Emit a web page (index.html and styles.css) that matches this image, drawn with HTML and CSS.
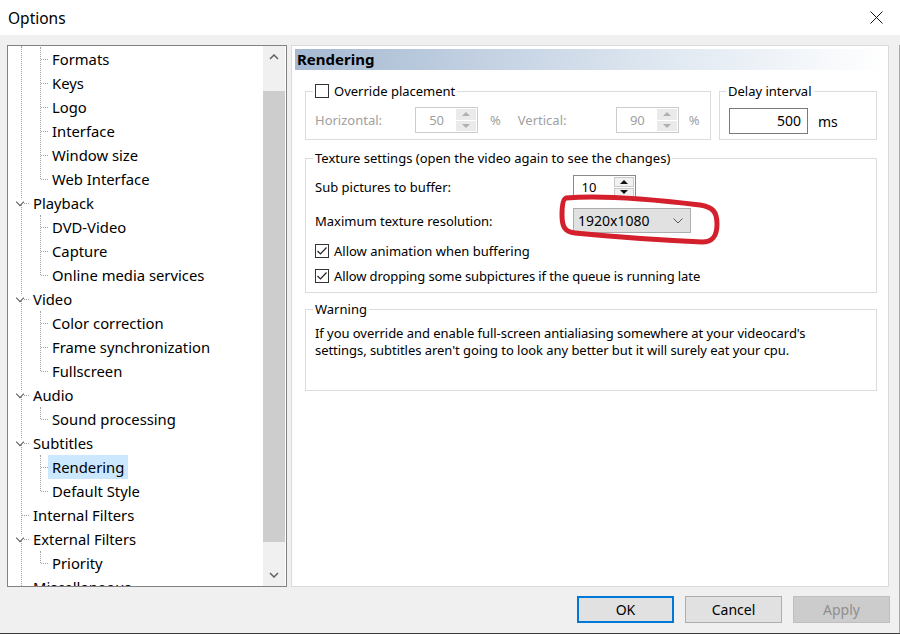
FILE: index.html
```html
<!DOCTYPE html>
<html lang="en">
<head>
    <meta charset="UTF-8">
    <title>Options</title>
    <link rel="stylesheet" href="styles.css">
</head>
<body>

<div class="window">
    <div class="titlebar">
        <span class="title">Options</span>
        <svg class="close" width="13" height="13" viewBox="0 0 13 13">
            <path d="M0.5 0.5 L12.5 12.5 M12.5 0.5 L0.5 12.5" stroke="#111" stroke-width="1" fill="none"/>
        </svg>
    </div>

    <div class="client">
        <div class="main">
            <!-- arvore de paginas -->
            <div class="tree">
                <div class="tree-list">
                    <div class="group">
                        <div class="row l1"><span class="label">Formats</span></div>
                        <div class="row l1"><span class="label">Keys</span></div>
                        <div class="row l1"><span class="label">Logo</span></div>
                        <div class="row l1"><span class="label">Interface</span></div>
                        <div class="row l1"><span class="label">Window size</span></div>
                        <div class="row l1"><span class="label">Web Interface</span></div>
                    </div>
                    <div class="row l0 open"><span class="label">Playback</span></div>
                    <div class="group">
                        <div class="row l1"><span class="label">DVD-Video</span></div>
                        <div class="row l1"><span class="label">Capture</span></div>
                        <div class="row l1"><span class="label">Online media services</span></div>
                    </div>
                    <div class="row l0 open"><span class="label">Video</span></div>
                    <div class="group">
                        <div class="row l1"><span class="label">Color correction</span></div>
                        <div class="row l1"><span class="label">Frame synchronization</span></div>
                        <div class="row l1"><span class="label">Fullscreen</span></div>
                    </div>
                    <div class="row l0 open"><span class="label">Audio</span></div>
                    <div class="group">
                        <div class="row l1"><span class="label">Sound processing</span></div>
                    </div>
                    <div class="row l0 open"><span class="label">Subtitles</span></div>
                    <div class="group">
                        <div class="row l1"><span class="label selected">Rendering</span></div>
                        <div class="row l1"><span class="label">Default Style</span></div>
                    </div>
                    <div class="row l0"><span class="label">Internal Filters</span></div>
                    <div class="row l0 open"><span class="label">External Filters</span></div>
                    <div class="group">
                        <div class="row l1"><span class="label">Priority</span></div>
                    </div>
                    <div class="row l0"><span class="label">Miscellaneous</span></div>
                </div>
                <div class="scrollbar">
                    <div class="sb-btn">
                        <svg width="10" height="6" viewBox="0 0 10 6"><path d="M1 5 L5 1 L9 5" stroke="#606060" stroke-width="1.5" fill="none"/></svg>
                    </div>
                    <div class="sb-track"><div class="sb-thumb"></div></div>
                    <div class="sb-btn">
                        <svg width="10" height="6" viewBox="0 0 10 6"><path d="M1 1 L5 5 L9 1" stroke="#606060" stroke-width="1.5" fill="none"/></svg>
                    </div>
                </div>
            </div>

            <!-- pagina Rendering -->
            <div class="page">
                <div class="page-header">Rendering</div>
                <div class="page-body">
                    <div class="row-top">
                        <fieldset class="override">
                            <legend><span class="check"></span>Override placement</legend>
                            <div class="line disabled">
                                <span class="lbl-h">Horizontal:</span>
                                <div class="spin">
                                    <span class="spin-val">50</span>
                                    <span class="spin-btns"><span class="up"></span><span class="dn"></span></span>
                                </div>
                                <span class="pct">%</span>
                                <span class="lbl-v">Vertical:</span>
                                <div class="spin">
                                    <span class="spin-val">90</span>
                                    <span class="spin-btns"><span class="up"></span><span class="dn"></span></span>
                                </div>
                                <span class="pct last">%</span>
                            </div>
                        </fieldset>
                        <fieldset class="delay">
                            <legend>Delay interval</legend>
                            <div class="line">
                                <span class="textbox">500</span>
                                <span class="unit">ms</span>
                            </div>
                        </fieldset>
                    </div>

                    <fieldset class="texture">
                        <legend>Texture settings (open the video again to see the changes)</legend>
                        <div class="tex-row">
                            <span class="tex-label">Sub pictures to buffer:</span>
                            <div class="spin enabled">
                                <span class="spin-val">10</span>
                                <span class="spin-btns"><span class="up"></span><span class="dn"></span></span>
                            </div>
                        </div>
                        <div class="tex-row second">
                            <span class="tex-label">Maximum texture resolution:</span>
                            <div class="combo">
                                <span>1920x1080</span>
                                <svg width="10" height="6" viewBox="0 0 10 6"><path d="M0.5 0.5 L5 5 L9.5 0.5" stroke="#555" stroke-width="1" fill="none"/></svg>
                            </div>
                        </div>
                        <div class="check-row">
                            <span class="check on">
                                <svg width="12" height="12" viewBox="0 0 12 12"><path d="M1.5 6 L4.5 9 L10.5 2.5" stroke="#222" stroke-width="1.2" fill="none"/></svg>
                            </span>
                            Allow animation when buffering
                        </div>
                        <div class="check-row last">
                            <span class="check on">
                                <svg width="12" height="12" viewBox="0 0 12 12"><path d="M1.5 6 L4.5 9 L10.5 2.5" stroke="#222" stroke-width="1.2" fill="none"/></svg>
                            </span>
                            Allow dropping some subpictures if the queue is running late
                        </div>
                    </fieldset>

                    <fieldset class="warning">
                        <legend>Warning</legend>
                        <p>If you override and enable full-screen antialiasing somewhere at your videocard's<br>settings, subtitles aren't going to look any better but it will surely eat your cpu.</p>
                    </fieldset>
                </div>
            </div>
        </div>

        <div class="buttons">
            <button class="default">OK</button>
            <button>Cancel</button>
            <button disabled>Apply</button>
        </div>
    </div>

    <!-- marcacao vermelha desenhada por cima -->
    <svg class="mark" width="900" height="634" viewBox="0 0 900 634">
        <path d="M566 198 C600 195 650 199 700 205 C713 207 717 212 717 224 C717 236 713 242 702 242 C660 240 615 237 575 233 C565 232 562 227 562 215 C562 205 563 199 566 198 Z"
              stroke="#d3202c" stroke-width="5" fill="none" stroke-linejoin="round"/>
    </svg>
</div>

</body>
</html>
```

FILE: styles.css
```css
* {
    box-sizing: border-box;
}
body {
    margin: 0;
    font-family: "Noto Sans", "Open Sans", sans-serif;
    color: #000;
}
.window {
    width: 900px;
    height: 634px;
    background: #f0f0f0;
    position: relative;
    border-bottom: 1px solid #3a3a3a;
    overflow: hidden;
}
.titlebar {
    height: 35px;
    background: #fff;
    display: flex;
    align-items: center;
    justify-content: space-between;
    padding: 0 17px 0 8px;
}
.title {
    font-size: 15.5px;
}
.client {
    height: 598px;
    border-right: 1px solid #a8a8a8;
}
.main {
    display: flex;
    gap: 4px;
    height: 542px;
    margin: 10px 10px 0 7px;
}

/* tree */
.tree {
    width: 280px;
    border: 1px solid #828282;
    background: #fff;
    display: flex;
}
.tree-list {
    flex: 1;
    overflow: hidden;
    position: relative;
    padding-top: 1px;
    font-size: 14.8px;
}
.tree-list::before {
    content: '';
    position: absolute;
    left: 13px;
    top: 0;
    bottom: 0;
    border-left: 1px dotted #a0a0a0;
}
.group {
    position: relative;
}
.group::before {
    content: '';
    position: absolute;
    left: 32px;
    top: 0;
    height: calc(100% - 12px);
    border-left: 1px dotted #a0a0a0;
}
.row {
    height: 24px;
    display: flex;
    align-items: center;
    position: relative;
}
.row::before {
    content: '';
    position: absolute;
    top: 12px;
    width: 7px;
    border-top: 1px dotted #a0a0a0;
}
.row.l0 {
    padding-left: 21px;
}
.row.l0::before {
    left: 14px;
}
.row.l1 {
    padding-left: 40px;
}
.row.l1::before {
    left: 33px;
}
.row.open::after {
    content: '';
    position: absolute;
    left: 9px;
    top: 8px;
    width: 5px;
    height: 5px;
    border-right: 1.3px solid #555;
    border-bottom: 1.3px solid #555;
    transform: rotate(45deg);
    background: #fff;
}
.label {
    padding: 0 4px;
    line-height: 24px;
    white-space: nowrap;
}
.label.selected {
    background: #cce8ff;
}
.scrollbar {
    width: 22px;
    margin-right: 1px;
    background: #f0f0f0;
    display: flex;
    flex-direction: column;
}
.sb-btn {
    height: 22px;
    display: flex;
    align-items: center;
    justify-content: center;
}
.sb-track {
    flex: 1;
    padding-top: 23px;
}
.sb-thumb {
    height: 451px;
    background: #cdcdcd;
}

/* page */
.page {
    flex: 1;
    background: #fff;
    border: 1px solid #dadada;
    padding: 3px 3px 0;
}
.page-header {
    height: 21px;
    line-height: 21px;
    padding-left: 2px;
    font-size: 15px;
    font-weight: bold;
    background: linear-gradient(to right, #a5b9d2, #dde6f0 60%, #fff);
}
.page-body {
    padding: 0 8px 0 10px;
    font-size: 13px;
}
fieldset {
    margin: 0;
    border: 1px solid #dcdcdc;
    min-width: 0;
}
legend {
    padding: 0 2px;
    margin-left: -2px;
    line-height: 18px;
    display: flex;
    align-items: center;
}
.row-top {
    display: flex;
    gap: 8px;
    margin-top: 12px;
}
.override {
    width: 406px;
    padding: 7px 9px 6px;
}
.delay {
    flex: 1;
    padding: 8px 9px 0;
}
.delay legend {
    margin-left: -3px;
}
.line {
    display: flex;
    align-items: center;
}
.disabled {
    color: #a0a0a0;
}
.lbl-h {
    width: 100px;
}
.lbl-v {
    width: 98px;
}
.pct {
    margin: 0 17px 0 12px;
}
.pct.last {
    margin: 0 0 0 10px;
}
.spin {
    display: flex;
    width: 63px;
    height: 26px;
    border: 1px solid #cccccc;
    background: #fff;
}
.spin-val {
    flex: 1;
    text-align: right;
    padding-right: 11px;
    line-height: 24px;
}
.spin-btns {
    width: 22px;
    display: flex;
    flex-direction: column;
    gap: 1px;
    padding: 1px;
}
.spin-btns span {
    flex: 1;
    background: #eaeaea;
    display: flex;
    align-items: center;
    justify-content: center;
}
.spin-btns .up::before {
    content: '';
    border-left: 4px solid transparent;
    border-right: 4px solid transparent;
    border-bottom: 4px solid #b0b0b0;
}
.spin-btns .dn::before {
    content: '';
    border-left: 4px solid transparent;
    border-right: 4px solid transparent;
    border-top: 4px solid #b0b0b0;
}
.spin.enabled {
    height: 24px;
    border-color: #8a8a8a;
    color: #000;
}
.spin.enabled .spin-val {
    line-height: 22px;
    padding-right: 9px;
    text-align: center;
}
.spin.enabled .spin-btns span {
    background: #f0f0f0;
    border: 1px solid #c8c8c8;
}
.spin.enabled .up::before {
    border-bottom-color: #111;
}
.spin.enabled .dn::before {
    border-top-color: #111;
}
.textbox {
    width: 79px;
    height: 26px;
    border: 1px solid #7a7a7a;
    text-align: right;
    padding-right: 6px;
    line-height: 24px;
    font-size: 14px;
}
.unit {
    margin-left: 10px;
    font-size: 14px;
}
.texture {
    margin-top: 9px;
    padding: 8px 9px 7px;
}
.tex-row {
    display: flex;
    align-items: center;
}
.tex-row.second {
    margin-top: 9px;
}
.tex-label {
    width: 258px;
}
.combo {
    width: 118px;
    height: 25px;
    background: #e1e1e1;
    border: 1px solid #adadad;
    display: flex;
    align-items: center;
    justify-content: space-between;
    padding: 0 7px 0 4px;
    font-size: 14px;
}
.check-row {
    display: flex;
    align-items: center;
    height: 18px;
    margin-top: 9px;
}
.check-row.last {
    margin-top: 7px;
    letter-spacing: -0.1px;
}
.check {
    width: 14px;
    height: 14px;
    border: 1px solid #333;
    background: #fff;
    margin-right: 5px;
    display: flex;
    align-items: center;
    justify-content: center;
}
.warning {
    margin-top: 7px;
    padding: 7px 9px 31px;
}
.warning p {
    margin: 0;
    line-height: 17px;
    letter-spacing: -0.05px;
}

/* buttons */
.buttons {
    display: flex;
    justify-content: flex-end;
    gap: 11px;
    padding: 9px 9px 0 0;
}
button {
    width: 97px;
    height: 27px;
    font-family: "Noto Sans", "Open Sans", sans-serif;
    font-size: 14px;
    background: #e1e1e1;
    border: 1px solid #adadad;
    color: #000;
}
button.default {
    border: 2px solid #0078d7;
}
button:disabled {
    background: #cccccc;
    border-color: #bfbfbf;
    color: #8f8f8f;
}
.mark {
    position: absolute;
    left: 0;
    top: 0;
    pointer-events: none;
}
```
